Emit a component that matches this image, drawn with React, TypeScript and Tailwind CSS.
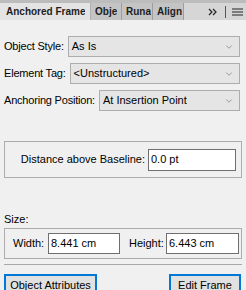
import { ChevronDown } from "lucide-react";

const font = { fontFamily: '"Liberation Sans", Arial, sans-serif' };

function Select({ label, value }: { label: string; value: string }) {
  return (
    <div className="flex items-center gap-[4px] h-[21px]">
      <div className="shrink-0 whitespace-nowrap text-[11px] tracking-[-0.2px] text-black">{label}</div>
      <div className="flex-1 h-full flex items-center justify-between border border-[#adadad] bg-[#e5e5e5] pl-[3px] pr-[5px] text-[11px] text-black">
        <span className="whitespace-nowrap">{value}</span>
        <ChevronDown className="w-[10px] h-[10px] text-[#6b6b6b]" strokeWidth={1.5} />
      </div>
    </div>
  );
}

function Tab({ label, active }: { label: string; active?: boolean }) {
  return (
    <div
      className={`h-full flex items-center overflow-hidden whitespace-nowrap border-r text-[10px] font-bold text-[#1e1e1e] ${
        active ? "w-[91px] bg-[#e4e4e4] border-[#b0b0b0] pl-[6px]" : "w-[31px] bg-[#c4c4c4] border-[#9e9e9e] pl-[4px]"
      }`}
    >
      <span className="block overflow-hidden">{label}</span>
    </div>
  );
}

export default function App() {
  return (
    <div className="w-[246px] h-[290px] bg-[#f0f0f0] overflow-hidden" style={font}>
      {/* tab strip */}
      <div className="flex h-[20px] bg-[#d6d6d6] border-t-[3px] border-[#bcbcbc]">
        <Tab label="Anchored Frame" active />
        <Tab label="Obje" />
        <Tab label="Runa" />
        <Tab label="Align" />
        <div className="flex-1 flex items-center justify-end pr-[3px]">
          <svg width="9" height="8" viewBox="0 0 9 8" className="mr-[8px]">
            <path d="M1 1l3 3-3 3M5 1l3 3-3 3" fill="none" stroke="#222" strokeWidth="1.2" />
          </svg>
          <div className="w-px h-[12px] bg-[#555] mr-[6px]" />
          <svg width="11" height="8" viewBox="0 0 11 8">
            <path d="M0 1h11M0 4h11M0 7h11" stroke="#222" strokeWidth="1" />
          </svg>
        </div>
      </div>

      <div className="px-[4px]">
        <div className="mt-[16px] flex flex-col gap-[6px] pr-[2px]">
          <Select label="Object Style:" value="As Is" />
          <Select label="Element Tag:" value="<Unstructured>" />
          <Select label="Anchoring Position:" value="At Insertion Point" />
        </div>

        <div className="mt-[30px] h-[37px] border border-[#adadad] flex items-center justify-end pr-[5px]">
          <span className="text-[11px] text-black mr-[3px]">Distance above Baseline:</span>
          <div className="w-[88px] h-[22px] bg-white border border-[#6f6f6f] flex items-center pl-[2px] text-[11px] text-black">
            0.0 pt
          </div>
        </div>

        <div className="mt-[35px] text-[11px] text-black leading-[13px]">Size:</div>
        <div className="mt-[2px] h-[31px] border border-[#adadad] flex items-center pl-[8px]">
          <span className="text-[11px] text-black w-[35px]">Width:</span>
          <div className="w-[72px] h-[21px] bg-white border border-[#6f6f6f] flex items-center pl-[2px] text-[11px] text-black">
            8.441 cm
          </div>
          <span className="text-[11px] text-black ml-[9px] w-[37px]">Height:</span>
          <div className="w-[73px] h-[21px] bg-white border border-[#6f6f6f] flex items-center pl-[2px] text-[11px] text-black">
            6.443 cm
          </div>
        </div>

        <div className="mt-[5px] h-px bg-[#a8a8a8]" />

        <div className="mt-[9px] flex justify-between pr-[1px]">
          <div className="w-[93px] h-[23px] border-2 border-[#0078d7] bg-[#e1e1e1] flex items-center justify-center text-[11px] text-black">
            Object Attributes
          </div>
          <div className="w-[72px] h-[23px] border-2 border-[#0078d7] bg-[#e1e1e1] flex items-center justify-center text-[11px] text-black">
            Edit Frame
          </div>
        </div>
      </div>
    </div>
  );
}
